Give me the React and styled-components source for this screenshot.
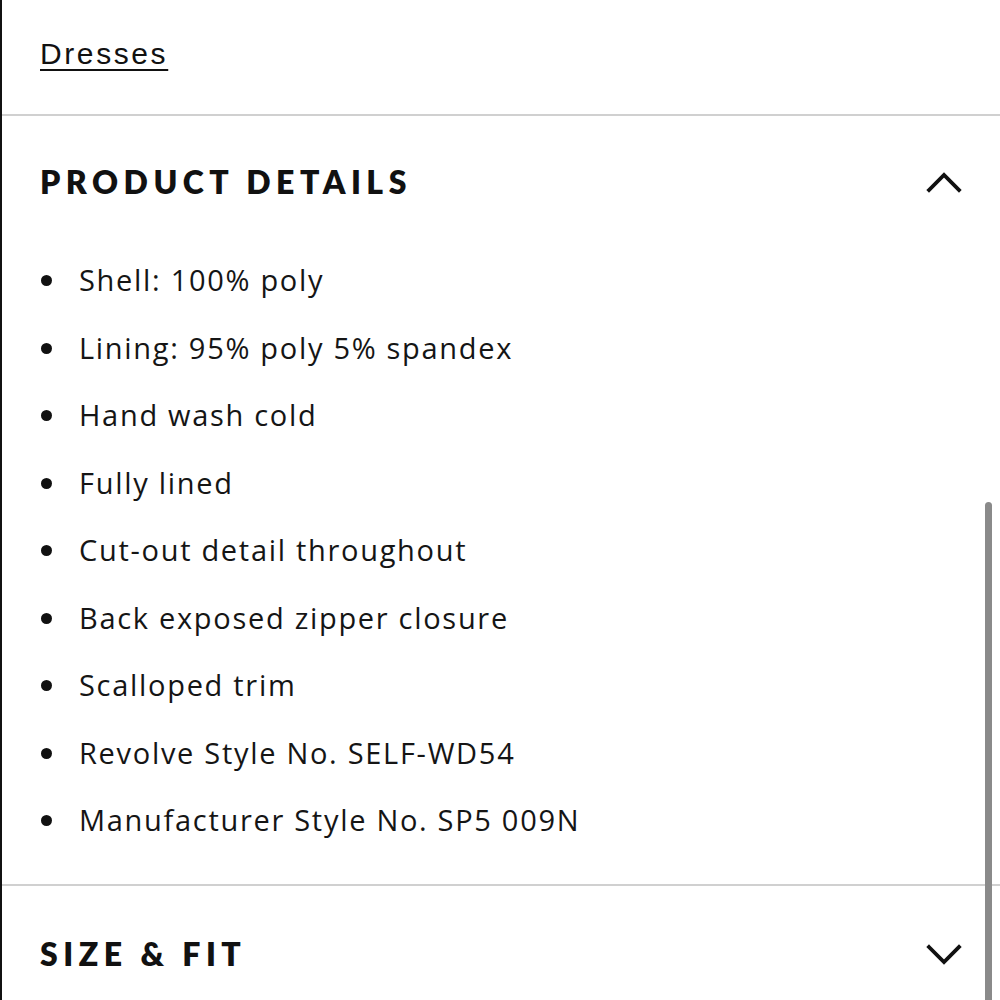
import React from "react";
import styled, { createGlobalStyle } from "styled-components";

const Global = createGlobalStyle`
  html, body { margin: 0; padding: 0; background: #fff; overflow: hidden; }
  body { font-family: "Open Sans", "Liberation Sans", sans-serif; color: #111; }
`;

const Page = styled.div`
  position: relative;
  width: 1000px;
  height: 1000px;
  box-sizing: border-box;
  border-left: 2px solid #111;
  overflow: hidden;
`;

const Crumb = styled.div`
  height: 116px;
  box-sizing: border-box;
  padding: 37px 0 0 38px;
  border-bottom: 2px solid #d0d0d0;
`;

const CrumbLink = styled.a`
  font-family: "Liberation Sans", Arial, sans-serif;
  font-size: 30px;
  letter-spacing: 2.6px;
  color: #111;
  text-decoration: underline;
  text-underline-offset: 5px;
  text-decoration-thickness: 2px;
`;

const Section = styled.section`
  border-bottom: ${(p) => (p.$last ? "none" : "2px solid #d0d0d0")};
  padding-bottom: ${(p) => (p.$open ? "30px" : "0")};
`;

const Header = styled.div`
  height: ${(p) => p.$h}px;
  display: flex;
  align-items: center;
  justify-content: space-between;
  padding: 0 38px 0 38px;
`;

const Title = styled.h2`
  margin: 0;
  font-family: Lato, "Liberation Sans", sans-serif;
  font-weight: 800;
  font-size: 32px;
  letter-spacing: 5.5px;
  color: #111;
`;

const List = styled.ul`
  list-style: none;
  margin: 0;
  padding: 0 0 0 38px;
`;

const Item = styled.li`
  height: 67.5px;
  display: flex;
  align-items: center;
  font-size: 29px;
  letter-spacing: 1.7px;
  color: #151515;
  &::before {
    content: "";
    width: 11px;
    height: 11px;
    border-radius: 50%;
    background: #111;
    margin: 2px 27px 0 1px;
    flex: none;
  }
`;

const Scroll = styled.div`
  position: absolute;
  right: 8px;
  top: 502px;
  width: 7px;
  height: 520px;
  border-radius: 4px;
  background: #8a8a8a;
`;

const Chevron = ({ up }) => (
  <svg width="36" height="24" viewBox="0 0 36 24" fill="none">
    <polyline
      points={up ? "3,21 18,6 33,21" : "3,5 18,20 33,5"}
      stroke="#111"
      strokeWidth="3.8"
      strokeLinecap="square"
      strokeLinejoin="miter"
    />
  </svg>
);

const items = [
  "Shell: 100% poly",
  "Lining: 95% poly 5% spandex",
  "Hand wash cold",
  "Fully lined",
  "Cut-out detail throughout",
  "Back exposed zipper closure",
  "Scalloped trim",
  "Revolve Style No. SELF-WD54",
  "Manufacturer Style No. SP5 009N",
];

export default function App() {
  return (
    <>
      <Global />
      <Page>
        <Crumb>
          <CrumbLink href="#">Dresses</CrumbLink>
        </Crumb>
        <Section $open>
          <Header $h={130}>
            <Title>PRODUCT DETAILS</Title>
            <Chevron up />
          </Header>
          <List>
            {items.map((t) => (
              <Item key={t}>{t}</Item>
            ))}
          </List>
        </Section>
        <Section $last>
          <Header $h={136}>
            <Title>SIZE &amp; FIT</Title>
            <Chevron />
          </Header>
        </Section>
        <Scroll />
      </Page>
    </>
  );
}
